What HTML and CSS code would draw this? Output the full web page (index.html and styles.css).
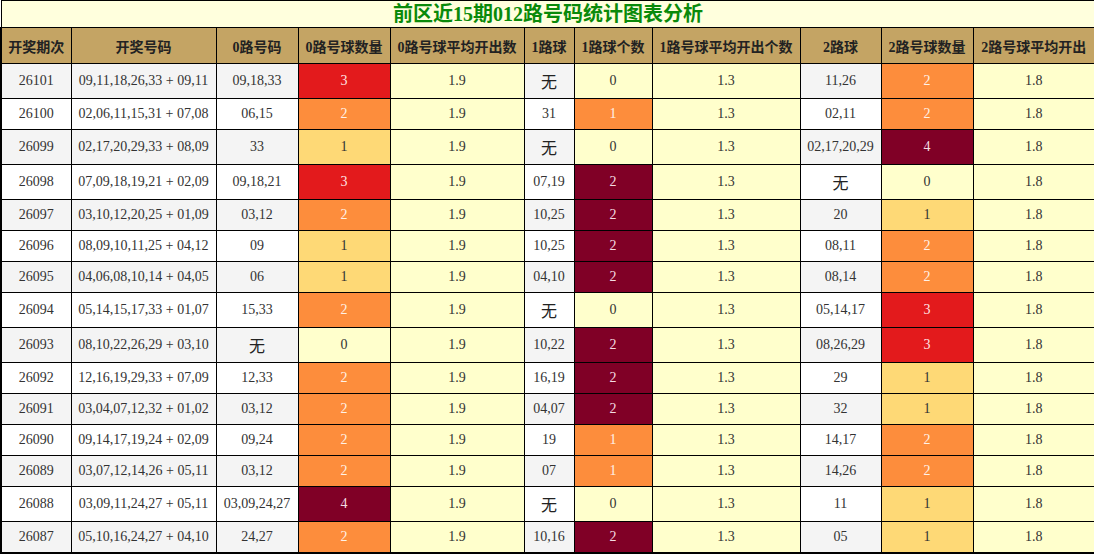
FILE: index.html
```html
<!DOCTYPE html>
<html lang="zh">
<head>
<meta charset="utf-8">
<title>前区近15期012路号码统计图表分析</title>
<link rel="stylesheet" href="styles.css">
</head>
<body>
<table class="stats">
<colgroup>
<col class="c1"><col class="c2"><col class="c3"><col class="c4"><col class="c5"><col class="c6"><col class="c7"><col class="c8"><col class="c9"><col class="c10"><col class="c11">
</colgroup>
<thead>
<tr class="title-row"><th colspan="11" class="title">前区近15期012路号码统计图表分析</th></tr>
<tr class="head-row">
<th>开奖期次</th><th>开奖号码</th><th>0路号码</th><th>0路号球数量</th><th>0路号球平均开出数</th><th>1路球</th><th>1路球个数</th><th>1路号球平均开出个数</th><th>2路球</th><th>2路号球数量</th><th>2路号球平均开出</th>
</tr>
</thead>
<tbody>
<tr class="odd tall"><td>26101</td><td>09,11,18,26,33 + 09,11</td><td>09,18,33</td><td class="lv3">3</td><td class="avg">1.9</td><td><span class="none">无</span></td><td class="lv0">0</td><td class="avg">1.3</td><td>11,26</td><td class="lv2">2</td><td class="avg">1.8</td></tr>
<tr><td>26100</td><td>02,06,11,15,31 + 07,08</td><td>06,15</td><td class="lv2">2</td><td class="avg">1.9</td><td>31</td><td class="lv2">1</td><td class="avg">1.3</td><td>02,11</td><td class="lv2">2</td><td class="avg">1.8</td></tr>
<tr class="odd tall"><td>26099</td><td>02,17,20,29,33 + 08,09</td><td>33</td><td class="lv1">1</td><td class="avg">1.9</td><td><span class="none">无</span></td><td class="lv0">0</td><td class="avg">1.3</td><td>02,17,20,29</td><td class="lv4">4</td><td class="avg">1.8</td></tr>
<tr class="tall"><td>26098</td><td>07,09,18,19,21 + 02,09</td><td>09,18,21</td><td class="lv3">3</td><td class="avg">1.9</td><td>07,19</td><td class="lv4">2</td><td class="avg">1.3</td><td><span class="none">无</span></td><td class="lv0">0</td><td class="avg">1.8</td></tr>
<tr class="odd"><td>26097</td><td>03,10,12,20,25 + 01,09</td><td>03,12</td><td class="lv2">2</td><td class="avg">1.9</td><td>10,25</td><td class="lv4">2</td><td class="avg">1.3</td><td>20</td><td class="lv1">1</td><td class="avg">1.8</td></tr>
<tr><td>26096</td><td>08,09,10,11,25 + 04,12</td><td>09</td><td class="lv1">1</td><td class="avg">1.9</td><td>10,25</td><td class="lv4">2</td><td class="avg">1.3</td><td>08,11</td><td class="lv2">2</td><td class="avg">1.8</td></tr>
<tr class="odd"><td>26095</td><td>04,06,08,10,14 + 04,05</td><td>06</td><td class="lv1">1</td><td class="avg">1.9</td><td>04,10</td><td class="lv4">2</td><td class="avg">1.3</td><td>08,14</td><td class="lv2">2</td><td class="avg">1.8</td></tr>
<tr class="tall"><td>26094</td><td>05,14,15,17,33 + 01,07</td><td>15,33</td><td class="lv2">2</td><td class="avg">1.9</td><td><span class="none">无</span></td><td class="lv0">0</td><td class="avg">1.3</td><td>05,14,17</td><td class="lv3">3</td><td class="avg">1.8</td></tr>
<tr class="odd tall"><td>26093</td><td>08,10,22,26,29 + 03,10</td><td><span class="none">无</span></td><td class="lv0">0</td><td class="avg">1.9</td><td>10,22</td><td class="lv4">2</td><td class="avg">1.3</td><td>08,26,29</td><td class="lv3">3</td><td class="avg">1.8</td></tr>
<tr><td>26092</td><td>12,16,19,29,33 + 07,09</td><td>12,33</td><td class="lv2">2</td><td class="avg">1.9</td><td>16,19</td><td class="lv4">2</td><td class="avg">1.3</td><td>29</td><td class="lv1">1</td><td class="avg">1.8</td></tr>
<tr class="odd"><td>26091</td><td>03,04,07,12,32 + 01,02</td><td>03,12</td><td class="lv2">2</td><td class="avg">1.9</td><td>04,07</td><td class="lv4">2</td><td class="avg">1.3</td><td>32</td><td class="lv1">1</td><td class="avg">1.8</td></tr>
<tr><td>26090</td><td>09,14,17,19,24 + 02,09</td><td>09,24</td><td class="lv2">2</td><td class="avg">1.9</td><td>19</td><td class="lv2">1</td><td class="avg">1.3</td><td>14,17</td><td class="lv2">2</td><td class="avg">1.8</td></tr>
<tr class="odd"><td>26089</td><td>03,07,12,14,26 + 05,11</td><td>03,12</td><td class="lv2">2</td><td class="avg">1.9</td><td>07</td><td class="lv2">1</td><td class="avg">1.3</td><td>14,26</td><td class="lv2">2</td><td class="avg">1.8</td></tr>
<tr class="tall"><td>26088</td><td>03,09,11,24,27 + 05,11</td><td>03,09,24,27</td><td class="lv4">4</td><td class="avg">1.9</td><td><span class="none">无</span></td><td class="lv0">0</td><td class="avg">1.3</td><td>11</td><td class="lv1">1</td><td class="avg">1.8</td></tr>
<tr class="odd"><td>26087</td><td>05,10,16,24,27 + 04,10</td><td>24,27</td><td class="lv2">2</td><td class="avg">1.9</td><td>10,16</td><td class="lv4">2</td><td class="avg">1.3</td><td>05</td><td class="lv1">1</td><td class="avg">1.8</td></tr>
</tbody>
</table>
</body>
</html>
```
FILE: styles.css
```css
html, body {
  margin: 0;
  padding: 0;
  background: #ffffff;
}
body {
  font-family: "Liberation Serif", "Noto Sans CJK SC", serif;
  color: #333333;
}
.stats {
  border-collapse: collapse;
  table-layout: fixed;
  width: 1094px;
  font-size: 14px;
}
.c1 { width: 70px; }
.c2 { width: 145px; }
.c3 { width: 82px; }
.c4 { width: 92px; }
.c5 { width: 134px; }
.c6 { width: 50px; }
.c7 { width: 78px; }
.c8 { width: 148px; }
.c9 { width: 81px; }
.c10 { width: 92px; }
.c11 { width: 122px; }
.stats th, .stats td {
  border: 1px solid #000000;
  padding: 0;
  text-align: center;
  vertical-align: middle;
  white-space: nowrap;
  overflow: hidden;
}
.title {
  height: 26px;
  background: #ffffdd;
  color: #0a8a0a;
  font-size: 20px;
  font-weight: bold;
  line-height: 22px;
  border-width: 2px 2px 1px 2px;
}
.head-row th {
  height: 35px;
  background: #c4a464;
  color: #222222;
  font-size: 14px;
  font-weight: bold;
}
.stats td {
  height: 30px;
  background: #ffffff;
}
.stats tr.tall td {
  height: 34px;
}
.stats tr.odd td {
  background: #f4f4f4;
}
.none {
  font-family: "Noto Sans CJK SC", sans-serif;
  font-size: 16px;
  color: #222222;
}
.stats td.avg, .stats tr.odd td.avg { background: #ffffcc; }
.stats td.lv0, .stats tr.odd td.lv0 { background: #ffffcc; color: #333333; }
.stats td.lv1, .stats tr.odd td.lv1 { background: #fed976; color: #333333; }
.stats td.lv2, .stats tr.odd td.lv2 { background: #fd8d3c; color: #fff2e8; }
.stats td.lv3, .stats tr.odd td.lv3 { background: #e31a1c; color: #ffe4e4; }
.stats td.lv4, .stats tr.odd td.lv4 { background: #800026; color: #f4dce2; }
.stats tr:last-child td { border-bottom-width: 2px; }
.stats td:first-child, .head-row th:first-child { border-left-width: 2px; }
.stats td:last-child, .head-row th:last-child { border-right-width: 2px; }
```
